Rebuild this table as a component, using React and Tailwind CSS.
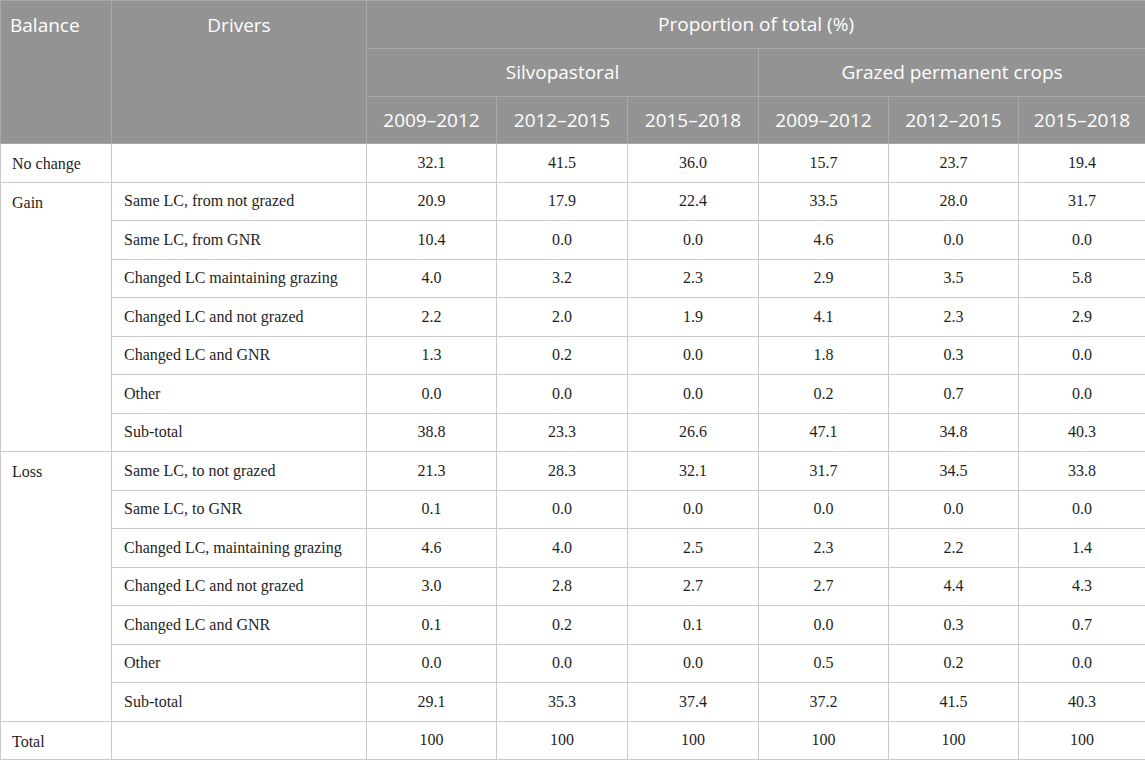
import React from "react";

const head = "bg-[#939393] text-white border border-[#a9a9a9] font-normal";
const cell = "border border-[#c9c9c9] h-[38.5px] align-middle";

const sections = [
    { balance: "No change", rows: [["", "32.1", "41.5", "36.0", "15.7", "23.7", "19.4"]] },
    {
        balance: "Gain",
        rows: [
            ["Same LC, from not grazed", "20.9", "17.9", "22.4", "33.5", "28.0", "31.7"],
            ["Same LC, from GNR", "10.4", "0.0", "0.0", "4.6", "0.0", "0.0"],
            ["Changed LC maintaining grazing", "4.0", "3.2", "2.3", "2.9", "3.5", "5.8"],
            ["Changed LC and not grazed", "2.2", "2.0", "1.9", "4.1", "2.3", "2.9"],
            ["Changed LC and GNR", "1.3", "0.2", "0.0", "1.8", "0.3", "0.0"],
            ["Other", "0.0", "0.0", "0.0", "0.2", "0.7", "0.0"],
            ["Sub-total", "38.8", "23.3", "26.6", "47.1", "34.8", "40.3"],
        ],
    },
    {
        balance: "Loss",
        rows: [
            ["Same LC, to not grazed", "21.3", "28.3", "32.1", "31.7", "34.5", "33.8"],
            ["Same LC, to GNR", "0.1", "0.0", "0.0", "0.0", "0.0", "0.0"],
            ["Changed LC, maintaining grazing", "4.6", "4.0", "2.5", "2.3", "2.2", "1.4"],
            ["Changed LC and not grazed", "3.0", "2.8", "2.7", "2.7", "4.4", "4.3"],
            ["Changed LC and GNR", "0.1", "0.2", "0.1", "0.0", "0.3", "0.7"],
            ["Other", "0.0", "0.0", "0.0", "0.5", "0.2", "0.0"],
            ["Sub-total", "29.1", "35.3", "37.4", "37.2", "41.5", "40.3"],
        ],
    },
    { balance: "Total", rows: [["", "100", "100", "100", "100", "100", "100"]] },
];

const years = ["2009–2012", "2012–2015", "2015–2018", "2009–2012", "2012–2015", "2015–2018"];

export default function App() {
    return (
        <div className="w-[1145px] h-[760px] bg-white overflow-hidden">
            <table className="w-[1145px] table-fixed border-collapse">
                <colgroup>
                    <col className="w-[111px]" />
                    <col className="w-[255px]" />
                    <col className="w-[130px]" />
                    <col className="w-[131px]" />
                    <col className="w-[131px]" />
                    <col className="w-[130px]" />
                    <col className="w-[130px]" />
                    <col className="w-[127px]" />
                </colgroup>
                <thead className="font-['Open_Sans',sans-serif] text-[19px]">
                    <tr className="h-[48px]">
                        <th rowSpan={3} className={`${head} text-left align-top pl-[9px] pt-[10px]`}>Balance</th>
                        <th rowSpan={3} className={`${head} text-center align-top pt-[10px]`}>Drivers</th>
                        <th colSpan={6} className={`${head} text-center`}>Proportion of total (%)</th>
                    </tr>
                    <tr className="h-[48px]">
                        <th colSpan={3} className={`${head} text-center`}>Silvopastoral</th>
                        <th colSpan={3} className={`${head} text-center`}>Grazed permanent crops</th>
                    </tr>
                    <tr className="h-[47px]">
                        {years.map((y, i) => (
                            <th key={i} className={`${head} text-center`}>{y}</th>
                        ))}
                    </tr>
                </thead>
                <tbody className="font-['Liberation_Serif',serif] text-[16px] text-[#1e1e1e]">
                    {sections.map((s) =>
                        s.rows.map((r, i) => (
                            <tr key={s.balance + i}>
                                {i === 0 && (
                                    <td rowSpan={s.rows.length} className={`${cell} align-top pl-[11px] pt-[8px]`}>
                                        {s.balance}
                                    </td>
                                )}
                                <td className={`${cell} pl-[12px]`}>{r[0]}</td>
                                {r.slice(1).map((v, j) => (
                                    <td key={j} className={`${cell} text-center`}>{v}</td>
                                ))}
                            </tr>
                        ))
                    )}
                </tbody>
            </table>
        </div>
    );
}
